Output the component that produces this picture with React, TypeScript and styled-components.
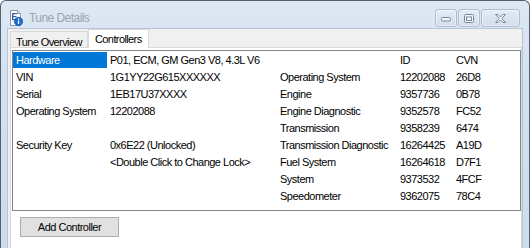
import styled, { createGlobalStyle } from "styled-components";

const GlobalStyle = createGlobalStyle`
  html, body {
    margin: 0;
    padding: 0;
    background: #ffffff;
    overflow: hidden;
  }
  body {
    font-family: "Liberation Sans", Arial, sans-serif;
  }
`;

const Window = styled.div`
  box-sizing: border-box;
  width: 530px;
  height: 248px;
  border: 1px solid #56616f;
  border-bottom: none;
  border-radius: 6px 6px 0 0;
  background: linear-gradient(180deg, #dee8f4 0%, #d3e1f0 30%, #cddcee 100%);
  padding: 0 7px;
  display: flex;
  flex-direction: column;
  overflow: hidden;
`;

const TitleBar = styled.div`
  height: 28px;
  flex: none;
  display: flex;
  align-items: flex-start;
`;

const TitleIcon = styled.svg`
  margin: 9px 0 0 1px;
  flex: none;
`;

const TitleText = styled.div`
  margin-left: 6px;
  padding-top: 9px;
  font-size: 12px;
  line-height: 16px;
  letter-spacing: -0.55px;
  color: #9ba3ad;
`;

const CaptionButtons = styled.div`
  margin: 8px 2px 0 auto;
  display: flex;
  gap: 1px;
`;

const CaptionButton = styled.div<{ $wide?: boolean }>`
  box-sizing: border-box;
  width: ${(p) => (p.$wide ? "39px" : "22px")};
  height: 18px;
  border: 1px solid #aebccc;
  border-radius: 3px;
  background: linear-gradient(180deg, #e4ecf6 0%, #d9e4f1 50%, #d2deed 100%);
  box-shadow: inset 0 0 0 1px rgba(255, 255, 255, 0.45);
  display: flex;
  align-items: center;
  justify-content: center;
`;

const Client = styled.div`
  flex: 1;
  background: #f0f0f0;
  box-shadow: 0 0 0 1px #b7c5d6;
  display: flex;
  flex-direction: column;
`;

const TabStrip = styled.div`
  height: 18px;
  flex: none;
  display: flex;
  align-items: flex-end;
  padding-left: 2px;
  position: relative;
  z-index: 1;
`;

const Tab = styled.div<{ $active?: boolean }>`
  box-sizing: border-box;
  height: ${(p) => (p.$active ? "19px" : "16px")};
  margin-bottom: ${(p) => (p.$active ? "-1px" : "0")};
  padding: ${(p) => (p.$active ? "3px 0 0 6px" : "4px 0 0 5px")};
  border: 1px solid #d9d9d9;
  border-bottom: none;
  background: ${(p) => (p.$active ? "#ffffff" : "#f0f0f0")};
  width: ${(p) => (p.$active ? "61px" : "78px")};
  font-size: 11px;
  line-height: 12px;
  letter-spacing: -0.6px;
  color: #000;
  white-space: nowrap;
`;

const TabPage = styled.div`
  flex: 1;
  margin-left: 2px;
  background: #ffffff;
  border: 1px solid #d9d9d9;
  border-bottom: none;
  padding: 2px 0 0 1px;
  display: flex;
  flex-direction: column;
  align-items: flex-start;
`;

const ListView = styled.div`
  box-sizing: border-box;
  width: 509px;
  height: 161px;
  flex: none;
  border: 1px solid #828790;
  background: #ffffff;
  padding-top: 1px;
  display: grid;
  grid-template-columns: 94px 170px 120px 56px 1fr;
  grid-auto-rows: 16px;
  row-gap: 1px;
  align-content: start;
`;

const Cell = styled.div<{ $selected?: boolean }>`
  padding-left: 3px;
  font-size: 11px;
  line-height: 16px;
  letter-spacing: -0.5px;
  white-space: nowrap;
  overflow: hidden;
  color: ${(p) => (p.$selected ? "#ffffff" : "#000000")};
  background: ${(p) => (p.$selected ? "#0078d7" : "transparent")};
`;

const AddButton = styled.button`
  box-sizing: border-box;
  margin: 6px 0 0 8px;
  width: 99px;
  height: 20px;
  flex: none;
  padding: 0;
  border: 1px solid #adadad;
  background: #e1e1e1;
  font-family: "Liberation Sans", Arial, sans-serif;
  font-size: 11px;
  letter-spacing: -0.5px;
  color: #000;
`;

type Row = [string, string, string, string, string];

const rows: Row[] = [
  ["Hardware", "P01, ECM, GM Gen3 V8, 4.3L V6", "", "ID", "CVN"],
  ["VIN", "1G1YY22G615XXXXXX", "Operating System", "12202088", "26D8"],
  ["Serial", "1EB17U37XXXX", "Engine", "9357736", "0B78"],
  ["Operating System", "12202088", "Engine Diagnostic", "9352578", "FC52"],
  ["", "", "Transmission", "9358239", "6474"],
  ["Security Key", "0x6E22 (Unlocked)", "Transmission Diagnostic", "16264425", "A19D"],
  ["", "<Double Click to Change Lock>", "Fuel System", "16264618", "D7F1"],
  ["", "", "System", "9373532", "4FCF"],
  ["", "", "Speedometer", "9362075", "78C4"],
];

const DocInfoIcon = () => (
  <TitleIcon width="14" height="16" viewBox="0 0 14 16">
    <path d="M1.5 0.5H8.5L11.5 3.5V15.5H1.5Z" fill="#ffffff" stroke="#8c97a6" />
    <path d="M8.5 0.5V3.5H11.5" fill="#e3e8ee" stroke="#8c97a6" />
    <rect x="3" y="3" width="1.3" height="7" fill="#2f5fa5" />
    <rect x="3" y="3" width="5" height="1.2" fill="#2f5fa5" />
    <rect x="3" y="6" width="4.5" height="1.2" fill="#2f5fa5" />
    <rect x="3" y="9" width="4" height="1.2" fill="#2f5fa5" />
    <circle cx="9.5" cy="11.5" r="4.2" fill="#1c6ad0" stroke="#0d4b9e" strokeWidth="0.6" />
    <circle cx="9.5" cy="9.3" r="0.8" fill="#ffffff" />
    <rect x="8.9" y="10.6" width="1.3" height="3.4" fill="#ffffff" />
  </TitleIcon>
);

export default function App() {
  return (
    <>
      <GlobalStyle />
      <Window>
        <TitleBar>
          <DocInfoIcon />
          <TitleText>Tune Details</TitleText>
          <CaptionButtons>
            <CaptionButton>
              <svg width="12" height="8" viewBox="0 0 12 8">
                <rect x="1.5" y="3.5" width="9" height="3.5" rx="1.2" fill="#f2f5f9" stroke="#7c8694" />
              </svg>
            </CaptionButton>
            <CaptionButton>
              <svg width="12" height="11" viewBox="0 0 12 11">
                <rect x="1.5" y="1.5" width="9" height="8" rx="1" fill="#f2f5f9" stroke="#7c8694" />
                <rect x="3.5" y="4" width="5" height="3.5" fill="none" stroke="#7c8694" />
              </svg>
            </CaptionButton>
            <CaptionButton $wide>
              <svg width="13" height="11" viewBox="0 0 13 11">
                <path
                  d="M1.5 1.5H4L6.5 4L9 1.5H11.5L7.8 5.5L11.5 9.5H9L6.5 7L4 9.5H1.5L5.2 5.5Z"
                  fill="#f2f5f9"
                  stroke="#7c8694"
                  strokeLinejoin="round"
                />
              </svg>
            </CaptionButton>
          </CaptionButtons>
        </TitleBar>
        <Client>
          <TabStrip>
            <Tab>Tune Overview</Tab>
            <Tab $active>Controllers</Tab>
          </TabStrip>
          <TabPage>
            <ListView>
              {rows.map((row, r) =>
                row.map((text, c) => (
                  <Cell key={`${r}-${c}`} $selected={r === 0 && c === 0}>
                    {text}
                  </Cell>
                ))
              )}
            </ListView>
            <AddButton>Add Controller</AddButton>
          </TabPage>
        </Client>
      </Window>
    </>
  );
}
